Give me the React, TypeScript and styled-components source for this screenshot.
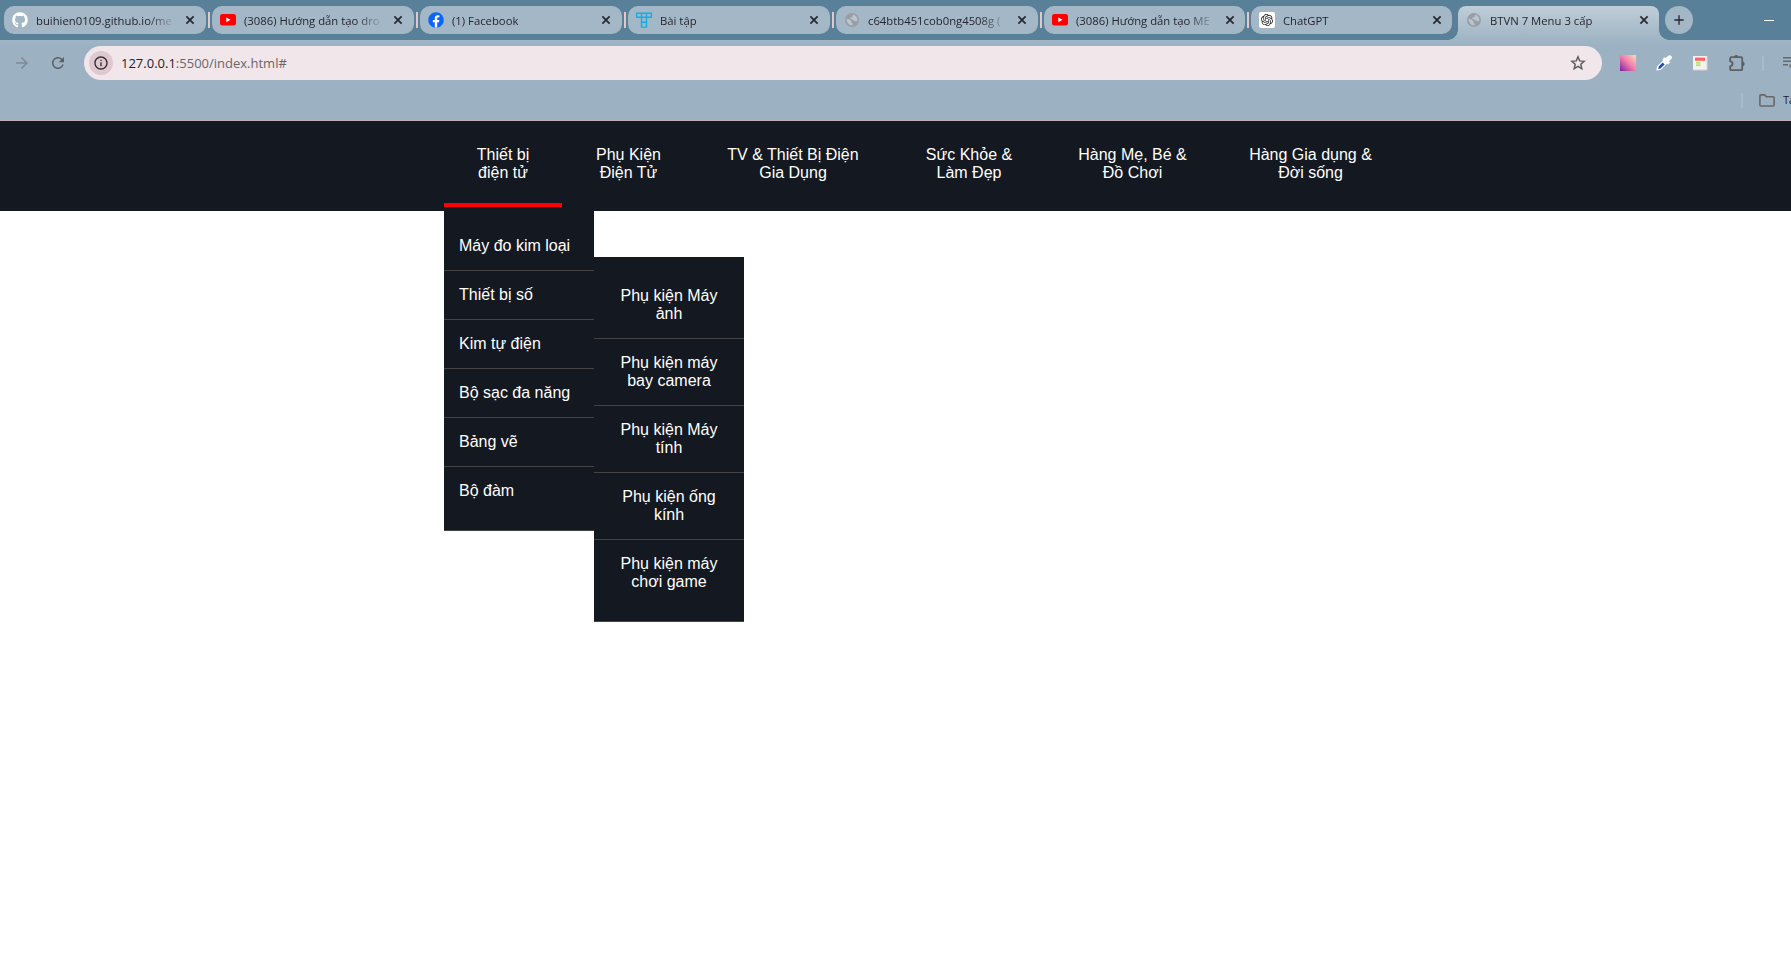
import React from "react";
import styled, { createGlobalStyle, css } from "styled-components";
import { FaGithub, FaFacebook } from "react-icons/fa";
import { SiOpenai } from "react-icons/si";
import { MdAdd, MdArrowForward, MdInfoOutline, MdRefresh } from "react-icons/md";

const color = {
  strip: "#588098",
  tab: "#a3b7c6",
  toolbar: "#9cb2c2",
  field: "#f1e6ea",
  chip: "#dfc8cf",
  nav: "#141820",
  rule: "#444444",
  icon: "#5f5f63",
};

const GlobalStyle = createGlobalStyle`
  * { box-sizing: border-box; }
  body { margin: 0; background: #fff; overflow: hidden; }
`;

const Screen = styled.div`
  width: 100%;
  height: 972px;
  overflow: hidden;
  display: flex;
  flex-direction: column;
`;

const TabStrip = styled.div`
  height: 40px;
  padding: 6px 0 0 4px;
  display: flex;
  background: ${color.strip};
  font-family: "Open Sans", "Noto Sans", sans-serif;
`;

const TabBox = styled.div<{ $width: number; $active?: boolean }>`
  position: relative;
  flex: none;
  width: ${(p) => p.$width}px;
  height: 28px;
  padding: 0 8px;
  display: flex;
  align-items: center;
  border-radius: 10px;
  background: ${color.tab};
  ${(p) =>
    p.$active &&
    css`
      height: 34px;
      padding-bottom: 6px;
      margin-left: 6px;
      border-radius: 8px 8px 0 0;
      background: linear-gradient(#bfcdd8, #a0b5c4);
      &::before,
      &::after {
        content: "";
        position: absolute;
        bottom: 0;
        width: 10px;
        height: 10px;
      }
      &::before {
        left: -10px;
        background: radial-gradient(circle at 0 0, transparent 9.5px, #a2b7c6 10px);
      }
      &::after {
        right: -10px;
        background: radial-gradient(circle at 100% 0, transparent 9.5px, #a2b7c6 10px);
      }
    `}
`;

const TabIcon = styled.span`
  flex: none;
  width: 16px;
  height: 16px;
  display: grid;
  place-items: center;
  svg { display: block; }
`;

const TabTitle = styled.span`
  flex: none;
  width: 140px;
  margin-left: 8px;
  white-space: nowrap;
  font-size: 11.3px;
  line-height: 20px;
  padding-top: 1px;
  color: #26262f;
  mask-image: linear-gradient(90deg, #000 112px, transparent 140px);
`;

const CloseSvg = styled.svg`
  flex: none;
  margin-left: 8px;
  fill: none;
  stroke: #26262f;
  stroke-width: 1.7;
`;

const TabDivider = styled.span`
  flex: none;
  width: 2px;
  height: 16px;
  margin: 6px 2px 0;
  background: #dfc8cf;
`;

const NewTab = styled.span`
  width: 28px;
  height: 28px;
  margin-left: 6px;
  border-radius: 50%;
  display: grid;
  place-items: center;
  background: ${color.tab};
  color: #26262f;
`;

const Minimize = styled.span`
  width: 10px;
  height: 1px;
  margin: 14px 0 0 71px;
  background: #fff;
`;

const Toolbar = styled.div`
  height: 46px;
  padding: 6px 0 6px 13px;
  display: flex;
  align-items: center;
  background: linear-gradient(#a0b5c4, ${color.toolbar} 6px);
  color: ${color.icon};
  svg { display: block; flex: none; }
`;

const NavIcon = styled.span<{ $dim?: boolean }>`
  flex: none;
  width: 18px;
  margin-right: 18px;
  color: ${(p) => (p.$dim ? "#7d8b95" : color.icon)};
`;

const AddressBar = styled.div`
  flex: none;
  width: 1518px;
  height: 34px;
  margin: 0 18px 0 -1px;
  padding: 0 16px 0 5px;
  border-radius: 17px;
  display: flex;
  align-items: center;
  background: ${color.field};
`;

const InfoChip = styled.span`
  width: 24px;
  height: 24px;
  border-radius: 50%;
  display: grid;
  place-items: center;
  background: ${color.chip};
  color: #2f2c31;
`;

const Url = styled.span`
  flex: 1;
  margin-left: 8px;
  font: 13px/20px "Open Sans", "Noto Sans", sans-serif;
  color: #6a6668;
  b { font-weight: 400; color: #242127; }
`;

const Extensions = styled.div`
  flex: none;
  display: flex;
  align-items: center;
  gap: 20px;
`;

const FaintDivider = styled.span`
  flex: none;
  width: 2px;
  height: 15px;
  background: #a7bbc9;
  ${Extensions} & { margin: 0 -1px 0 -4px; }
`;

const BookmarkBar = styled.div`
  height: 35px;
  padding: 0 0 6px 1741px;
  display: flex;
  align-items: center;
  background: ${color.toolbar};
  border-bottom: 1px solid #bfaeb4;
  overflow: hidden;
  white-space: nowrap;
  font: 11.3px/16px "Open Sans", "Noto Sans", sans-serif;
  letter-spacing: -0.4px;
  color: #26262f;
  svg { flex: none; margin: 0 8px 0 16px; color: #6b6668; }
`;

const NavBar = styled.nav`
  height: 90px;
  padding-left: 444px;
  display: flex;
  background: ${color.nav};
  color: #fff;
  font: 16px/18px Arial, "Liberation Sans", sans-serif;
  text-align: center;
`;

const NavItem = styled.div<{ $width: number; $open?: boolean }>`
  position: relative;
  flex: none;
  width: ${(p) => p.$width}px;
  height: 86px;
  padding-top: 25px;
  white-space: pre-line;
  border-bottom: 4px solid ${(p) => (p.$open ? "#ff0000" : "transparent")};
`;

const Menu = styled.ul`
  position: absolute;
  top: 90px;
  left: 0;
  width: 150px;
  margin: 0;
  padding: 11px 0 0;
  list-style: none;
  text-align: left;
  white-space: normal;
  background: ${color.nav};
`;

const SubMenu = styled(Menu)`
  top: -14px;
  left: 150px;
  padding-top: 15px;
  text-align: center;
`;

const MenuItem = styled.li`
  position: relative;
  padding: 15px;
  border-bottom: 1px solid ${color.rule};
  &:last-child { padding-bottom: 30px; }
`;

const Close = () => (
  <CloseSvg width="12" height="12" viewBox="0 0 12 12">
    <path d="M2.4 2.4l7.2 7.2M9.6 2.4L2.4 9.6" />
  </CloseSvg>
);

const Globe = () => (
  <svg width="14" height="14" viewBox="0 0 14 14">
    <circle cx="7" cy="7" r="7" fill="#9a9ea3" />
    <path d="M1.5 6 H3.6 L6.4 8 V9.4 L7.6 10.4 V12.3 Q2.2 12.4 1.5 6Z" fill="#b7c6d0" />
    <path d="M8.3 1.6 Q11.2 2.4 12.2 5.2 L12.3 8 Q10.8 9 9.8 7.8 L8.6 7.6 7.4 6.4 5.2 5.9 5.4 4.5 7.2 4.2Z" fill="#b7c6d0" />
  </svg>
);

const YouTube = () => (
  <svg width="16" height="12" viewBox="0 0 16 12">
    <rect width="16" height="11.6" rx="2.4" fill="#f00" />
    <path d="M6.3 3.4 10.6 5.8 6.3 8.2Z" fill="#fff" />
  </svg>
);

const Facebook = () => (
  <svg width="16" height="16" viewBox="0 0 16 16">
    <circle cx="8" cy="8" r="7.3" fill="#fff" />
    <FaFacebook size={16} color="#0866ff" />
  </svg>
);

const Blocks = () => (
  <svg width="16" height="16" viewBox="0 0 16 16" fill="none" stroke="#10aeea" strokeWidth="1.4">
    <path d="M.7 1.2h14.6v4.1H.7zM5.5 1.2v13.9h5V1.2M5.5 5.3h5M5.5 10.2h5" />
  </svg>
);

const ChatGpt = () => (
  <svg width="16" height="16" viewBox="0 0 16 16">
    <rect width="16" height="16" rx="2" fill="#fff" />
    <SiOpenai x={2} y={2} size={12} color="#222" />
  </svg>
);

const Star = () => (
  <svg width="16" height="16" viewBox="0 0 16 16">
    <path
      d="M8 1.8 9.7 5.9 14.1 6.3 10.8 9.2 11.8 13.6 8 11.3 4.2 13.6 5.2 9.2 1.9 6.3 6.3 5.9Z"
      fill="none"
      stroke="currentColor"
      strokeWidth="1.5"
    />
  </svg>
);

const Palette = () => (
  <svg width="16" height="16" viewBox="0 0 16 16">
    <defs>
      <linearGradient id="palette" x1="0" y1="1" x2="1" y2="0">
        <stop offset="0" stopColor="#7b1fa2" />
        <stop offset=".5" stopColor="#f27bac" />
        <stop offset="1" stopColor="#ffd9b8" />
      </linearGradient>
    </defs>
    <rect width="16" height="16" fill="url(#palette)" />
  </svg>
);

const Dropper = () => (
  <svg width="16" height="16" viewBox="0 0 16 16">
    <path d="M.4 15.6 1 11.6 7.4 5.2 6.4 4.2 8.4 2.2 9.8 3 12 .8Q13.8 -.4 15.4 1 16.4 2.8 15 4.4L13 6.4 14 7.6 12 9.4 11 8.6 4.6 15Z" fill="#fff" />
    <path d="M2.2 14 2.8 11.6 6.6 7.6 8.6 9.4 4.4 13.6Z" fill="#2447b8" />
  </svg>
);

const Card = () => (
  <svg width="16" height="16" viewBox="-1 -1 16 16">
    <rect width="14" height="14" fill="#f4f2ee" />
    <rect x="2" y="1.6" width="10" height="3.2" fill="#ff6262" />
    <path d="M3 6.8h4.4M3 9.2h4.4" stroke="#9bdc3a" strokeWidth="1.3" />
    <path d="M14 0v14H0" fill="none" stroke="#d8d2cc" />
  </svg>
);

const Puzzle = () => (
  <svg width="18" height="17" viewBox="-1 0 18 17">
    <path
      d="M2.2 2.2H12.2Q13.2 2.2 13.2 3.2V14.2Q13.2 15.2 12.2 15.2H2.2Q1.2 15.2 1.2 14.2V11.4Q3.6 10.8 3.6 8.8 3.6 6.8 1.2 6.2V3.2Q1.2 2.2 2.2 2.2Z"
      fill="none"
      stroke="currentColor"
      strokeWidth="1.8"
    />
    <path d="M5 2.2a2.2 2.2 0 0 1 4.4 0ZM13.4 6.6a2.3 2.3 0 0 1 0 4.6Z" fill="currentColor" />
  </svg>
);

const Folder = () => (
  <svg width="16" height="13" viewBox="0 0 16 13">
    <path
      d="M1.8 .9H5.6L7.4 2.7H14.2Q15.1 2.7 15.1 3.6V11.1Q15.1 12 14.2 12H1.8Q.9 12 .9 11.1V1.8Q.9 .9 1.8 .9Z"
      fill="none"
      stroke="currentColor"
      strokeWidth="1.6"
    />
  </svg>
);

const MediaList = () => (
  <svg width="8" height="14" viewBox="0 0 8 14">
    <path d="M0 1.8h8M0 5.2h8M0 8.8h5M7.2 8.4v3" stroke="#6b6668" strokeWidth="1.5" />
  </svg>
);

const tabs = [
  { title: "buihien0109.github.io/me", icon: <FaGithub size={16} color="#fff" />, width: 202 },
  { title: "(3086) Hướng dẫn tạo dro", icon: <YouTube />, width: 202 },
  { title: "(1) Facebook", icon: <Facebook />, width: 202 },
  { title: "Bài tập", icon: <Blocks />, width: 202 },
  { title: "c64btb451cob0ng4508g (", icon: <Globe />, width: 202 },
  { title: "(3086) Hướng dẫn tạo ME", icon: <YouTube />, width: 201 },
  { title: "ChatGPT", icon: <ChatGpt />, width: 201 },
  { title: "BTVN 7 Menu 3 cấp", icon: <Globe />, width: 201, active: true },
];

const categories = [
  { label: "Thiết bị\nđiện tử", width: 118 },
  { label: "Phụ Kiện\nĐiện Tử", width: 133 },
  { label: "TV & Thiết Bị Điện\nGia Dụng", width: 196 },
  { label: "Sức Khỏe &\nLàm Đẹp", width: 156 },
  { label: "Hàng Mẹ, Bé &\nĐồ Chơi", width: 171 },
  { label: "Hàng Gia dụng &\nĐời sống", width: 185 },
];

const devices = ["Máy đo kim loại", "Thiết bị số", "Kim tự điện", "Bộ sạc đa năng", "Bảng vẽ", "Bộ đàm"];

const accessories = [
  "Phụ kiện Máy ảnh",
  "Phụ kiện máy bay camera",
  "Phụ kiện Máy tính",
  "Phụ kiện ống kính",
  "Phụ kiện máy chơi game",
];

const DeviceMenu = () => (
  <Menu>
    {devices.map((device) => (
      <MenuItem key={device}>
        {device}
        {device === "Thiết bị số" && (
          <SubMenu>
            {accessories.map((name) => (
              <MenuItem key={name}>{name}</MenuItem>
            ))}
          </SubMenu>
        )}
      </MenuItem>
    ))}
  </Menu>
);

export default function App() {
  return (
    <Screen>
      <GlobalStyle />
      <TabStrip>
        {tabs.map((tab, i) => (
          <React.Fragment key={tab.title}>
            <TabBox $width={tab.width} $active={tab.active}>
              <TabIcon>{tab.icon}</TabIcon>
              <TabTitle>{tab.title}</TabTitle>
              <Close />
            </TabBox>
            {i < tabs.length - 2 && <TabDivider />}
          </React.Fragment>
        ))}
        <NewTab>
          <MdAdd size={16} />
        </NewTab>
        <Minimize />
      </TabStrip>
      <Toolbar>
        <NavIcon $dim>
          <MdArrowForward size={18} />
        </NavIcon>
        <NavIcon>
          <MdRefresh size={18} />
        </NavIcon>
        <AddressBar>
          <InfoChip>
            <MdInfoOutline size={16} />
          </InfoChip>
          <Url>
            <b>127.0.0.1</b>:5500/index.html#
          </Url>
          <Star />
        </AddressBar>
        <Extensions>
          <Palette />
          <Dropper />
          <Card />
          <Puzzle />
          <FaintDivider />
          <MediaList />
        </Extensions>
      </Toolbar>
      <BookmarkBar>
        <FaintDivider />
        <Folder />
        Ta
      </BookmarkBar>
      <NavBar>
        {categories.map((category, i) => (
          <NavItem key={category.label} $width={category.width} $open={i === 0}>
            {category.label}
            {i === 0 && <DeviceMenu />}
          </NavItem>
        ))}
      </NavBar>
    </Screen>
  );
}
